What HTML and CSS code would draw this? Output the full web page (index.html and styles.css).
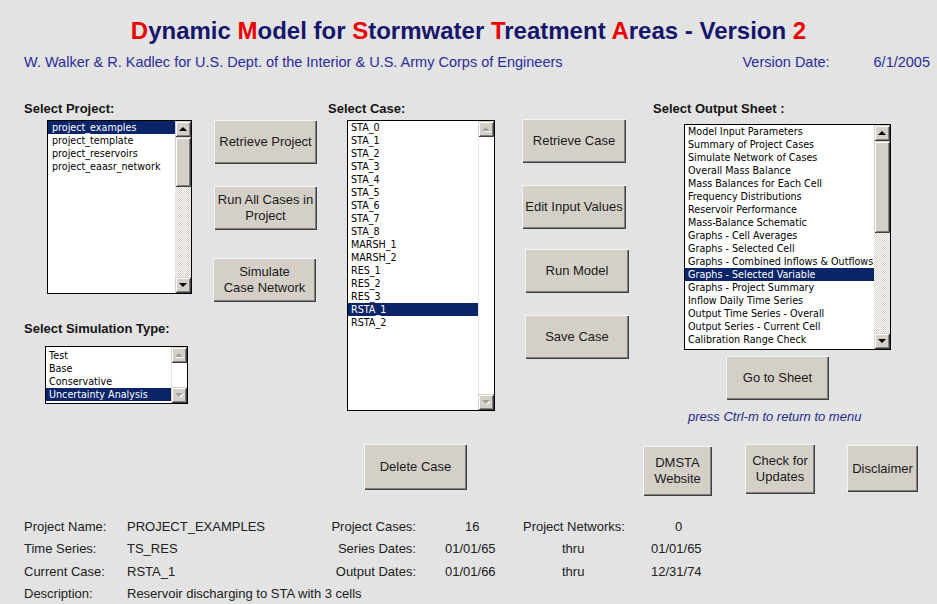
FILE: index.html
```html
<!DOCTYPE html>
<html lang="en">
<head>
<meta charset="utf-8">
<title>DMSTA Version 2</title>
<link rel="stylesheet" href="styles.css">
</head>
<body>
<header class="hdr">
  <h1 class="title"><span class="r">D</span>ynamic <span class="r">M</span>odel for <span class="r">S</span>tormwater <span class="r">T</span>reatment <span class="r">A</span>reas - Version <span class="r">2</span></h1>
  <div class="sub">
    <span>W. Walker &amp; R. Kadlec for U.S. Dept. of the Interior &amp; U.S. Army Corps of Engineers</span>
    <span class="vd">Version Date:</span>
    <span class="vdate">6/1/2005</span>
  </div>
</header>

<main class="main">
  <section class="col col-a">
    <h2 class="lbl">Select Project:</h2>
    <div class="pair">
      <div class="lb lb-proj">
        <ul class="items">
          <li class="sel">project_examples</li>
          <li>project_template</li>
          <li>project_reservoirs</li>
          <li>project_eaasr_network</li>
        </ul>
        <div class="sb">
          <div class="sbtn up"></div>
          <div class="thumb thumb-proj"></div>
          <div class="track"></div>
          <div class="sbtn down"></div>
        </div>
      </div>
      <div class="btns btns-a">
        <button class="btn b-rp">Retrieve Project</button>
        <button class="btn b-ra">Run All Cases in<br>Project</button>
        <button class="btn b-sc">Simulate<br>Case Network</button>
      </div>
    </div>
    <h2 class="lbl lbl-sim">Select Simulation Type:</h2>
    <div class="lb lb-sim">
      <ul class="items">
        <li>Test</li>
        <li>Base</li>
        <li>Conservative</li>
        <li class="sel">Uncertainty Analysis</li>
      </ul>
      <div class="sb off">
        <div class="sbtn up"></div>
        <div class="track plain"></div>
        <div class="sbtn down"></div>
      </div>
    </div>
  </section>

  <section class="col col-b">
    <h2 class="lbl">Select Case:</h2>
    <div class="pair">
      <div class="lb lb-case">
        <ul class="items">
          <li>STA_0</li>
          <li>STA_1</li>
          <li>STA_2</li>
          <li>STA_3</li>
          <li>STA_4</li>
          <li>STA_5</li>
          <li>STA_6</li>
          <li>STA_7</li>
          <li>STA_8</li>
          <li>MARSH_1</li>
          <li>MARSH_2</li>
          <li>RES_1</li>
          <li>RES_2</li>
          <li>RES_3</li>
          <li class="sel">RSTA_1</li>
          <li>RSTA_2</li>
        </ul>
        <div class="sb off">
          <div class="sbtn up"></div>
          <div class="track plain"></div>
          <div class="sbtn down"></div>
        </div>
      </div>
      <div class="btns btns-b">
        <button class="btn b-rc">Retrieve Case</button>
        <button class="btn b-ei">Edit Input Values</button>
        <button class="btn b-rm">Run Model</button>
        <button class="btn b-sv">Save Case</button>
      </div>
    </div>
    <button class="btn b-del">Delete Case</button>
  </section>

  <section class="col col-c">
    <h2 class="lbl lbl-out">Select Output Sheet :</h2>
    <div class="lb lb-out">
      <ul class="items">
        <li>Model Input Parameters</li>
        <li>Summary of Project Cases</li>
        <li>Simulate Network of Cases</li>
        <li>Overall Mass Balance</li>
        <li>Mass Balances for Each Cell</li>
        <li>Frequency Distributions</li>
        <li>Reservoir Performance</li>
        <li>Mass-Balance Schematic</li>
        <li>Graphs - Cell Averages</li>
        <li>Graphs - Selected Cell</li>
        <li>Graphs - Combined Inflows &amp; Outflows</li>
        <li class="sel">Graphs - Selected Variable</li>
        <li>Graphs - Project Summary</li>
        <li>Inflow Daily Time Series</li>
        <li>Output Time Series - Overall</li>
        <li>Output Series - Current Cell</li>
        <li>Calibration Range Check</li>
      </ul>
      <div class="sb">
        <div class="sbtn up"></div>
        <div class="thumb thumb-out"></div>
        <div class="track"></div>
        <div class="sbtn down"></div>
      </div>
    </div>
    <button class="btn b-go">Go to Sheet</button>
    <p class="hint">press Ctrl-m to return to menu</p>
    <div class="btn-row">
      <button class="btn b-web">DMSTA<br>Website</button>
      <button class="btn b-upd">Check for<br>Updates</button>
      <button class="btn b-dis">Disclaimer</button>
    </div>
  </section>
</main>

<section class="info">
  <span>Project Name:</span>
  <span>PROJECT_EXAMPLES</span>
  <span class="rt">Project Cases:</span>
  <span class="p-count">16</span>
  <span class="p-net">Project Networks:</span>
  <span class="p-zero">0</span>

  <span>Time Series:</span>
  <span>TS_RES</span>
  <span class="rt">Series Dates:</span>
  <span class="p-date">01/01/65</span>
  <span class="p-thru">thru</span>
  <span class="p-date2">01/01/65</span>

  <span>Current Case:</span>
  <span>RSTA_1</span>
  <span class="rt">Output Dates:</span>
  <span class="p-date">01/01/66</span>
  <span class="p-thru">thru</span>
  <span class="p-date2">12/31/74</span>

  <span>Description:</span>
  <span class="desc">Reservoir discharging to STA with 3 cells</span>
</section>
</body>
</html>
```

FILE: styles.css
```css
* { box-sizing: border-box; }

html, body {
  margin: 0;
  padding: 0;
  background: #e3e3e3;
}

body {
  width: 937px;
  height: 604px;
  overflow: hidden;
  font-family: "Liberation Sans", Arial, sans-serif;
  color: #1a1a1a;
}

/* ---------- header ---------- */
.hdr { padding-top: 17px; }

.title {
  margin: 0;
  text-align: center;
  font-size: 24px;
  line-height: 28px;
  font-weight: bold;
  color: #15166b;
}
.title .r { color: #ee0000; }

.sub {
  display: flex;
  margin-top: 10px;
  padding-left: 24px;
  font-size: 14.5px;
  line-height: 15px;
  color: #2a2c9c;
  white-space: nowrap;
}
.sub .vd { margin-left: auto; }
.sub .vdate { margin-left: 44px; padding-right: 7px; }

/* ---------- main ---------- */
.main {
  display: flex;
  margin-top: 31px;
  height: 414px;
  padding-left: 24px;
}

.col { display: flex; flex-direction: column; align-items: flex-start; }
.col-a { width: 304px; }
.col-b { width: 315px; }
.col-c { width: 294px; }

.lbl {
  margin: 0;
  font-size: 13px;
  line-height: 15px;
  font-weight: bold;
  color: #141414;
  white-space: nowrap;
}
.lbl-sim { margin-top: 19px; }
.lbl-out { padding-left: 10px; }

.pair {
  display: flex;
  align-items: flex-start;
  margin-top: 4px;
}

/* ---------- list boxes ---------- */
.lb {
  display: flex;
  background: #fff;
  border: 1px solid #000;
}
.items {
  flex: 1;
  margin: 0;
  padding: 0;
  list-style: none;
  overflow: hidden;
  font-family: "DejaVu Sans", Tahoma, sans-serif;
  font-size: 9.6px;
  line-height: 13px;
  color: #000;
}
.items li {
  height: 13px;
  padding-left: 3px;
  white-space: nowrap;
}
.items li.sel { background: #0a246a; color: #fff; }

.lb-proj { width: 145px; height: 174px; margin-left: 23px; }
.lb-proj .items li { padding-left: 4px; }
.lb-sim { width: 143px; height: 58px; margin-left: 21px; margin-top: 10px; }
.lb-sim .items { padding-top: 2px; }
.lb-case { width: 148px; height: 291px; margin-left: 19px; }
.lb-out { width: 207px; height: 226px; margin-left: 41px; margin-top: 8px; }

/* ---------- scrollbars ---------- */
.sb {
  width: 16px;
  display: flex;
  flex-direction: column;
}
.sbtn, .thumb {
  background: #d4d0c8;
  box-shadow: inset 1px 1px #d4d0c8, inset -1px -1px #404040,
              inset 2px 2px #ffffff, inset -2px -2px #808080;
}
.sbtn {
  height: 16px;
  flex: none;
  display: flex;
  align-items: center;
  justify-content: center;
}
.sbtn::before {
  content: "";
  width: 0;
  height: 0;
  border-left: 4px solid transparent;
  border-right: 4px solid transparent;
}
.sbtn.up::before { border-bottom: 4px solid #000; margin-top: -1px; }
.sbtn.down::before { border-top: 4px solid #000; }

.sb.off .sbtn.up::before { border-bottom-color: #a0a0a0; }
.sb.off .sbtn.down::before { border-top-color: #a0a0a0; }
.sb.off .sbtn::before { filter: drop-shadow(1px 1px 0 #ffffff); }

.thumb { flex: none; }
.thumb-proj { height: 50px; }
.thumb-out { height: 92px; }

.track {
  flex: 1;
  background-color: #fff;
  background-image: conic-gradient(#d4d0c8 0 25%, #fff 0 50%, #d4d0c8 0 75%, #fff 0);
  background-size: 2px 2px;
}
.track.plain {
  background: #fff;
  border-left: 1px solid #e8e8e8;
}

/* ---------- buttons ---------- */
.btn {
  display: flex;
  align-items: center;
  justify-content: center;
  flex: none;
  margin: 0;
  padding: 0;
  border: none;
  background: #d4d0c8;
  box-shadow: inset 1px 1px #f4f4f4, inset -1px -1px #404040,
              inset -2px -2px #808080;
  font-family: "Liberation Sans", Arial, sans-serif;
  font-size: 13px;
  line-height: 16px;
  color: #1a1a1a;
  text-align: center;
  white-space: nowrap;
}

.btns { display: flex; flex-direction: column; align-items: flex-start; }
.btns-a { margin-left: 22px; }
.btns-a .btn { width: 103px; height: 44px; }
.b-ra { margin-top: 22px; }
.b-sc { margin-top: 28px; margin-left: -1px; }

.btns-b { margin-left: 27px; }
.btns-b .btn { width: 104px; height: 44px; }
.b-rc { margin-top: -1px; }
.b-ei { margin-top: 22px; }
.b-rm { margin-top: 20px; margin-left: 3px; }
.b-sv { margin-top: 22px; margin-left: 3px; }

.b-del { width: 103px; height: 46px; margin-top: 33px; margin-left: 36px; }

.b-go { width: 103px; height: 44px; margin-top: 6px; margin-left: 83px; }

.hint {
  margin: 9px 0 0 45px;
  font-size: 13px;
  line-height: 15px;
  font-style: italic;
  color: #1c2a8c;
  white-space: nowrap;
}

.btn-row {
  display: flex;
  align-items: flex-start;
  margin-top: 20px;
}
.b-web { width: 69px; height: 50px; margin-top: 2px; }
.b-upd { width: 70px; height: 50px; margin-left: 33px; }
.b-dis { width: 71px; height: 47px; margin-left: 32px; margin-top: 1px; }

/* ---------- info ---------- */
.info {
  display: grid;
  grid-template-columns: 103px 198px 91px 104px 120px 1fr;
  grid-auto-rows: 22.5px;
  align-items: center;
  padding-left: 24px;
  font-size: 13px;
  line-height: 15px;
  color: #202020;
  white-space: nowrap;
}
.info .rt { text-align: right; }
.p-count { padding-left: 49px; }
.p-net { padding-left: 3px; }
.p-zero { padding-left: 35px; }
.p-date { padding-left: 29px; }
.p-thru { padding-left: 42px; }
.p-date2 { padding-left: 11px; }
.desc { grid-column: 2 / span 5; }
```
